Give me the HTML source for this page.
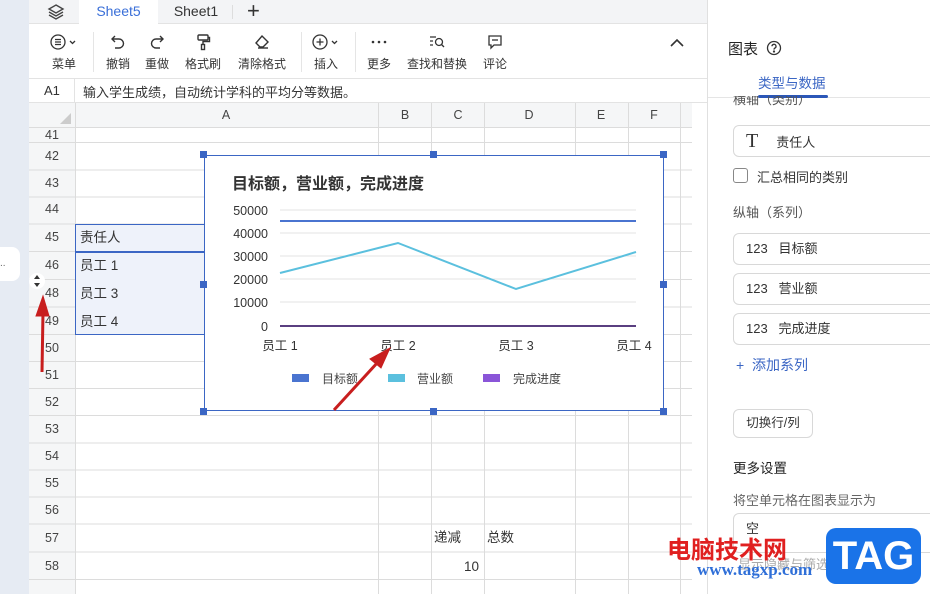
<!DOCTYPE html>
<html><head><meta charset="utf-8"><style>
*{box-sizing:border-box;margin:0;padding:0}
body{width:930px;height:594px;overflow:hidden;position:relative;background:#fff;font-family:"Liberation Sans","Noto Sans CJK SC",sans-serif;color:#333;font-size:13px}
.abs{position:absolute}
.lstrip{left:0;top:0;width:29px;height:594px;background:#e6ebf3}
.tabs{left:29px;top:0;width:679px;height:24px;background:#f3f4f6;border-bottom:1px solid #e3e3e3}
.tb{left:29px;top:24px;width:679px;height:55px;background:#fff;border-bottom:1px solid #e3e3e3}
.tool{position:absolute;top:0;text-align:center;font-size:12px;color:#333}
.tool svg{display:block;margin:9px auto 4px}
.fx{left:29px;top:79px;width:679px;height:24px;background:#fff;border-bottom:1px solid #e3e3e3;font-size:13px}
.grid{left:29px;top:103px;width:663px;height:491px;overflow:hidden}
.rp{left:707px;top:0;width:223px;height:594px;background:#fff;border-left:1px solid #e0e0e0}
.box{position:absolute;left:25px;width:210px;height:32px;border:1px solid #d8d8d8;border-radius:6px;font-size:13px;line-height:30px;padding-left:12px}
</style></head><body>
<div class="abs lstrip"></div>
<div class="abs" style="left:0;top:247px;width:20px;height:34px;background:#fff;border-radius:0 8px 8px 0;font-size:10px;line-height:34px;color:#666">..</div>
<div class="abs tabs">
 <svg class="abs" style="left:18px;top:3px" width="18" height="18" viewBox="0 0 18 18" fill="none" stroke="#444" stroke-width="1.4"><path d="M9 2L16 6L9 10L2 6Z"/><path d="M2 9L9 13L16 9"/><path d="M2 12L9 16L16 12"/></svg>
 <div class="abs" style="left:50px;top:0;width:79px;height:24px;background:#fff;color:#3a6fd8;font-size:14px;line-height:22px;text-align:center">Sheet5</div>
 <div class="abs" style="left:132px;top:0;width:70px;height:24px;font-size:14px;line-height:22px;text-align:center;color:#333">Sheet1</div>
 <div class="abs" style="left:203px;top:5px;width:1px;height:14px;background:#ddd"></div>
 <div class="abs" style="left:218px;top:-2px;font-size:22px;color:#333">+</div>
</div>
<div class="abs tb">
 <div class="tool" style="left:14px;width:42px"><svg width="30" height="18" viewBox="0 0 30 18" fill="none" stroke="#333" stroke-width="1.3"><circle cx="9" cy="9" r="7"/><path d="M6 6.5h6M6 9h6M6 11.5h6"/><path d="M21 8l2.5 2.5L26 8"/></svg>菜单</div>
 <div class="abs" style="left:64px;top:8px;width:1px;height:40px;background:#e5e5e5"></div>
 <div class="tool" style="left:74px;width:30px"><svg width="18" height="18" viewBox="0 0 18 18" fill="none" stroke="#333" stroke-width="1.4"><path d="M6 3L3 6l3 3"/><path d="M3 6h7a4.5 4.5 0 010 9H6"/></svg>撤销</div>
 <div class="tool" style="left:113px;width:30px"><svg width="18" height="18" viewBox="0 0 18 18" fill="none" stroke="#333" stroke-width="1.4"><path d="M12 3l3 3-3 3"/><path d="M15 6H8a4.5 4.5 0 000 9h4"/></svg>重做</div>
 <div class="tool" style="left:152px;width:44px"><svg width="18" height="18" viewBox="0 0 18 18" fill="none" stroke="#333" stroke-width="1.4"><rect x="4" y="2" width="10" height="5" rx="1"/><path d="M14 4.5h1.5v4H9v3"/><rect x="7.5" y="11.5" width="3" height="5"/></svg>格式刷</div>
 <div class="tool" style="left:205px;width:56px"><svg width="18" height="18" viewBox="0 0 18 18" fill="none" stroke="#333" stroke-width="1.4"><path d="M9 3l6 6-5 5H7l-4-4z"/><path d="M5 15h10"/></svg>清除格式</div>
 <div class="abs" style="left:272px;top:8px;width:1px;height:40px;background:#e5e5e5"></div>
 <div class="tool" style="left:280px;width:34px"><svg width="30" height="18" viewBox="0 0 30 18" fill="none" stroke="#333" stroke-width="1.3"><circle cx="9" cy="9" r="7"/><path d="M9 5.5v7M5.5 9h7"/><path d="M21 8l2.5 2.5L26 8"/></svg>插入</div>
 <div class="abs" style="left:326px;top:8px;width:1px;height:40px;background:#e5e5e5"></div>
 <div class="tool" style="left:336px;width:28px"><svg width="18" height="18" viewBox="0 0 18 18" fill="#333"><circle cx="3" cy="9" r="1.3"/><circle cx="9" cy="9" r="1.3"/><circle cx="15" cy="9" r="1.3"/></svg>更多</div>
 <div class="tool" style="left:376px;width:64px"><svg width="18" height="18" viewBox="0 0 18 18" fill="none" stroke="#333" stroke-width="1.3"><path d="M2 4h6M2 8h3M2 12h3"/><circle cx="11" cy="9" r="3.5"/><path d="M13.5 11.5L16 14"/></svg>查找和替换</div>
 <div class="tool" style="left:452px;width:28px"><svg width="18" height="18" viewBox="0 0 18 18" fill="none" stroke="#333" stroke-width="1.3"><path d="M3 3h12v9H8l-3 3v-3H3z"/><path d="M6 7h6"/></svg>评论</div>
 <svg class="abs" style="left:640px;top:13px" width="16" height="12" viewBox="0 0 16 12" fill="none" stroke="#333" stroke-width="1.6"><path d="M2 9l6-6 6 6"/></svg>
</div>
<div class="abs fx"><span class="abs" style="left:15px;top:4px">A1</span><div class="abs" style="left:45px;top:0;width:1px;height:24px;background:#e3e3e3"></div><span class="abs" style="left:54px;top:3px">输入学生成绩，自动统计学科的平均分等数据。</span></div>

<div class="abs grid">
<svg width="663" height="491" style="position:absolute;left:0;top:0">
 <rect x="0" y="0" width="663" height="24" fill="#f5f6f7"/>
 <rect x="0" y="0" width="46" height="491" fill="#f5f6f7"/>
 <path d="M42 10L42 21L31 21Z" fill="#ccc"/>
 <g stroke="#dcdcdc" stroke-width="1">
  <line x1="0" y1="24.5" x2="663" y2="24.5"/>
  <line x1="46.5" y1="0" x2="46.5" y2="491"/>
  <line x1="349.5" y1="0" x2="349.5" y2="491"/><line x1="402.5" y1="0" x2="402.5" y2="491"/>
  <line x1="455.5" y1="0" x2="455.5" y2="491"/><line x1="546.5" y1="0" x2="546.5" y2="491"/>
  <line x1="599.5" y1="0" x2="599.5" y2="491"/><line x1="651.5" y1="0" x2="651.5" y2="491"/>
  <line x1="0" y1="39.5" x2="663" y2="39.5"/><line x1="0" y1="67" x2="663" y2="67"/><line x1="0" y1="94" x2="663" y2="94"/><line x1="0" y1="121" x2="663" y2="121"/><line x1="0" y1="148.5" x2="663" y2="148.5"/><line x1="0" y1="176.5" x2="663" y2="176.5"/><line x1="0" y1="204" x2="663" y2="204"/><line x1="0" y1="231.5" x2="663" y2="231.5"/><line x1="0" y1="258.5" x2="663" y2="258.5"/><line x1="0" y1="285.5" x2="663" y2="285.5"/><line x1="0" y1="312.5" x2="663" y2="312.5"/><line x1="0" y1="340" x2="663" y2="340"/><line x1="0" y1="367" x2="663" y2="367"/><line x1="0" y1="394" x2="663" y2="394"/><line x1="0" y1="421" x2="663" y2="421"/><line x1="0" y1="449" x2="663" y2="449"/><line x1="0" y1="476.5" x2="663" y2="476.5"/>
 </g>
 <rect x="46.5" y="121.5" width="130" height="27" fill="#eef2fa" stroke="#3b66c4"/>
 <rect x="46.5" y="149.5" width="130" height="82" fill="#eef2fa" stroke="#3b66c4"/>
 <g font-size="12.5" fill="#444" text-anchor="middle" font-family="Liberation Sans,Noto Sans CJK SC,sans-serif">
  <text x="197" y="16">A</text><text x="376" y="16">B</text><text x="429" y="16">C</text><text x="500" y="16">D</text><text x="572" y="16">E</text><text x="625" y="16">F</text>
  <text x="23" y="36">41</text><text x="23" y="57">42</text><text x="23" y="84">43</text><text x="23" y="110">44</text><text x="23" y="138">45</text><text x="23" y="166">46</text><text x="23" y="194">48</text><text x="23" y="222">49</text><text x="23" y="249">50</text><text x="23" y="276">51</text><text x="23" y="303">52</text><text x="23" y="330">53</text><text x="23" y="357">54</text><text x="23" y="384">55</text><text x="23" y="411">56</text><text x="23" y="439">57</text><text x="23" y="467">58</text>
 </g>
 <g font-size="13.5" fill="#333" font-family="Liberation Sans,Noto Sans CJK SC,sans-serif">
  <text x="51" y="139">责任人</text><text x="51" y="167">员工 1</text><text x="51" y="195">员工 3</text><text x="51" y="223">员工 4</text>
  <text x="405" y="439">递减</text><text x="458" y="439">总数</text><text x="450" y="468" text-anchor="end">10</text>
 </g>
 <rect x="667" y="384" width="8" height="107" rx="4" fill="#ddd"/>
</svg>
</div>

<!-- chart -->
<div class="abs" style="left:204px;top:155px;width:460px;height:256px;background:#fff;border:1px solid #3b66c4"></div>
<svg class="abs" style="left:200px;top:151px" width="470" height="265">
 <g fill="#3b66c4"><rect x="0" y="0" width="7" height="7"/><rect x="230" y="0" width="7" height="7"/><rect x="460" y="0" width="7" height="7"/><rect x="0" y="130" width="7" height="7"/><rect x="460" y="130" width="7" height="7"/><rect x="0" y="257" width="7" height="7"/><rect x="230" y="257" width="7" height="7"/><rect x="460" y="257" width="7" height="7"/></g>
 <text x="32" y="38" font-size="16" font-weight="bold" fill="#333" font-family="Liberation Sans,Noto Sans CJK SC,sans-serif">目标额，营业额，完成进度</text>
 <g stroke="#e3e3e3"><line x1="80" y1="59" x2="436" y2="59"/><line x1="80" y1="82" x2="436" y2="82"/><line x1="80" y1="105" x2="436" y2="105"/><line x1="80" y1="128" x2="436" y2="128"/><line x1="80" y1="151" x2="436" y2="151"/></g>
 <g font-size="12.5" fill="#333" text-anchor="end" font-family="Liberation Sans,sans-serif"><text x="68" y="64">50000</text><text x="68" y="87">40000</text><text x="68" y="110">30000</text><text x="68" y="133">20000</text><text x="68" y="156">10000</text><text x="68" y="180">0</text></g>
 <line x1="80" y1="70" x2="436" y2="70" stroke="#4a74d0" stroke-width="2"/>
 <polyline points="80,122 198,92 316,138 436,101" fill="none" stroke="#5bc0de" stroke-width="2"/>
 <line x1="80" y1="175" x2="436" y2="175" stroke="#5a3f80" stroke-width="2"/>
 <g font-size="12.5" fill="#333" text-anchor="middle" font-family="Liberation Sans,Noto Sans CJK SC,sans-serif"><text x="80" y="199">员工 1</text><text x="198" y="199">员工 2</text><text x="316" y="199">员工 3</text><text x="434" y="199">员工 4</text></g>
 <rect x="92" y="223" width="17" height="8" fill="#4a74d0"/><rect x="188" y="223" width="17" height="8" fill="#5bc0de"/><rect x="283" y="223" width="17" height="8" fill="#8a55d8"/>
 <g font-size="12" fill="#444" font-family="Liberation Sans,Noto Sans CJK SC,sans-serif"><text x="122" y="232">目标额</text><text x="217" y="232">营业额</text><text x="313" y="232">完成进度</text></g>
</svg>
<!-- arrows -->
<svg class="abs" style="left:0;top:0" width="700" height="594">
 <g stroke="#c81e1e" stroke-width="3" fill="#c81e1e">
  <line x1="42" y1="372" x2="43" y2="312"/><path d="M36 316L43 296L49 316Z" stroke-width="1"/>
  <line x1="334" y1="410" x2="378" y2="362"/><path d="M370 359L390 348L381 368Z" stroke-width="1"/>
 </g>
 <circle cx="37" cy="281" r="8" fill="#fff"/><path d="M34 279l3-4 3 4zM34 283l3 4 3-4z" fill="#333"/>
</svg>

<div class="abs rp">
 <div class="abs" style="left:20px;top:38px;font-size:15px;color:#222">图表</div>
 <svg class="abs" style="left:58px;top:40px" width="16" height="16" viewBox="0 0 16 16" fill="none" stroke="#333" stroke-width="1.3"><circle cx="8" cy="8" r="6.5"/><path d="M6 6.3a2 2 0 113 1.7c-.8.4-1 .8-1 1.6"/><circle cx="8" cy="11.5" r=".5" fill="#333"/></svg>
 <div class="abs" style="left:50px;top:72px;font-size:13.5px;color:#3b66c4">类型与数据</div>
 <div class="abs" style="left:0;top:97px;width:223px;height:1px;background:#e5e5e5"></div>
 <div class="abs" style="left:50px;top:95px;width:70px;height:3px;background:#2b57b8;border-radius:2px"></div>
 <div class="abs" style="left:25px;top:96px;font-size:13px;color:#555;height:12px;overflow:hidden;line-height:8px">横轴（类别）</div>
 <div class="box" style="top:125px"><span style="font-family:'Liberation Serif',serif;font-size:20px;margin-right:18px">T</span>责任人</div>
 <div class="abs" style="left:25px;top:168px;width:15px;height:15px;border:1px solid #888;border-radius:3px"></div>
 <div class="abs" style="left:49px;top:167px;font-size:13px;color:#333">汇总相同的类别</div>
 <div class="abs" style="left:25px;top:202px;font-size:13px;color:#555">纵轴（系列）</div>
 <div class="box" style="top:233px">123&nbsp;&nbsp;&nbsp;目标额</div>
 <div class="box" style="top:273px">123&nbsp;&nbsp;&nbsp;营业额</div>
 <div class="box" style="top:313px">123&nbsp;&nbsp;&nbsp;完成进度</div>
 <div class="abs" style="left:28px;top:355px;font-size:14px;color:#3b66c4">+&nbsp;&nbsp;添加系列</div>
 <div class="abs" style="left:25px;top:409px;width:80px;height:29px;border:1px solid #d8d8d8;border-radius:6px;font-size:12.5px;line-height:27px;text-align:center">切换行/列</div>
 <div class="abs" style="left:25px;top:457px;font-size:13.5px;color:#222">更多设置</div>
 <div class="abs" style="left:25px;top:490px;font-size:13px;color:#666">将空单元格在图表显示为</div>
 <div class="box" style="top:513px;height:40px">空</div>
 <div class="abs" style="left:30px;top:554px;font-size:13px;color:#aaa">显示隐藏与筛选的数据</div>
</div>
<!-- watermark -->
<div class="abs" style="left:667px;top:530px;font-size:24px;font-weight:bold;color:#e02020;font-family:'Noto Sans CJK SC',sans-serif">电脑技术网</div>
<div class="abs" style="left:697px;top:560px;font-size:17px;font-weight:bold;color:#2f6fd8;font-family:'Liberation Serif',serif">www.tagxp.com</div>
<div class="abs" style="left:826px;top:528px;width:95px;height:56px;background:#1a73e8;border-radius:10px;color:#fff;font-size:40px;font-weight:bold;line-height:56px;text-align:center">TAG</div>
</body></html>
